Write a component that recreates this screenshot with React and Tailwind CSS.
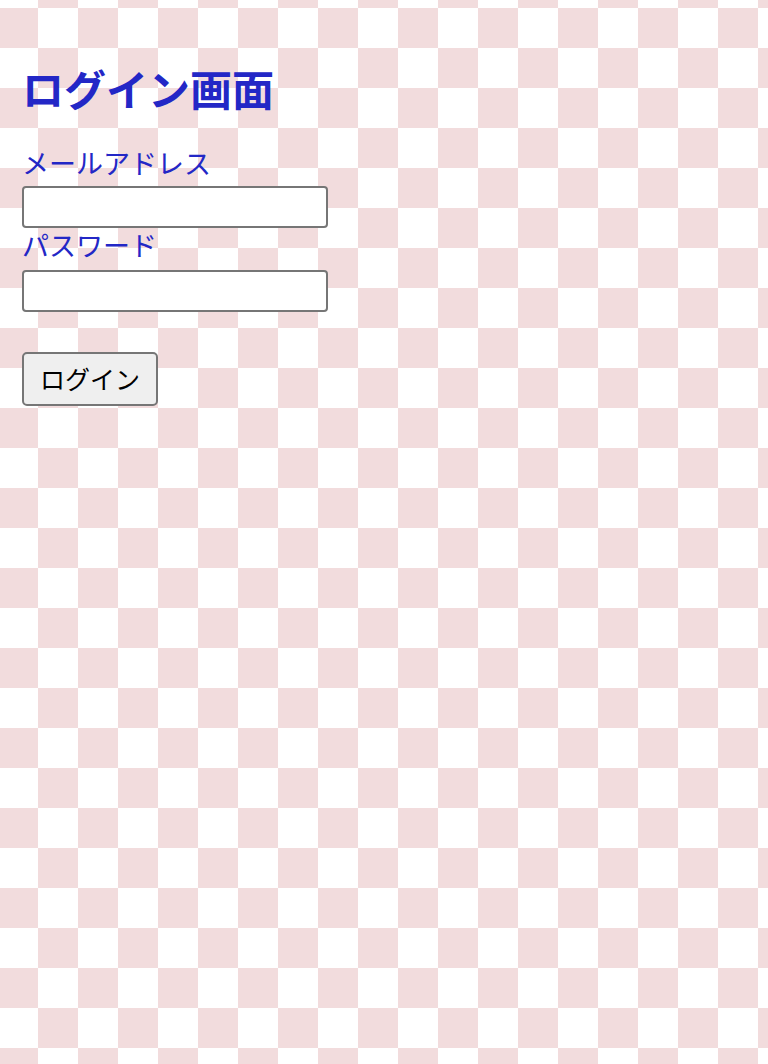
import React from "react";

const App = () => {
  return (
    <div className="min-h-screen bg-white [background-image:repeating-conic-gradient(#f2dcdd_0%_25%,#ffffff_0%_50%)] [background-size:80px_80px] [background-position:38px_8px] font-['Noto_Sans_CJK_JP','Noto_Sans',sans-serif]">
      <div className="pl-[22px] pt-[58px]">
        <h1 className="text-[42px] leading-[59px] font-bold text-[#2327c6]">ログイン画面</h1>
        <form className="mt-[30px] flex flex-col items-start" onSubmit={(e) => e.preventDefault()}>
          <label htmlFor="email" className="block h-[39px] text-[27px] leading-[31px] text-[#2327c6]">
            メールアドレス
          </label>
          <input
            id="email"
            type="email"
            className="block w-[306px] h-[42px] bg-white border-2 border-[#767676] rounded-[4px]"
          />
          <label htmlFor="password" className="block h-[42px] text-[27px] leading-[34px] text-[#2327c6]">
            パスワード
          </label>
          <input
            id="password"
            type="password"
            className="block w-[306px] h-[42px] bg-white border-2 border-[#767676] rounded-[4px]"
          />
          <button
            type="submit"
            className="mt-[40px] w-[136px] h-[54px] bg-[#efefef] border-2 border-[#767676] rounded-[5px] text-[25px] text-black"
          >
            ログイン
          </button>
        </form>
      </div>
    </div>
  );
};

export default App;
